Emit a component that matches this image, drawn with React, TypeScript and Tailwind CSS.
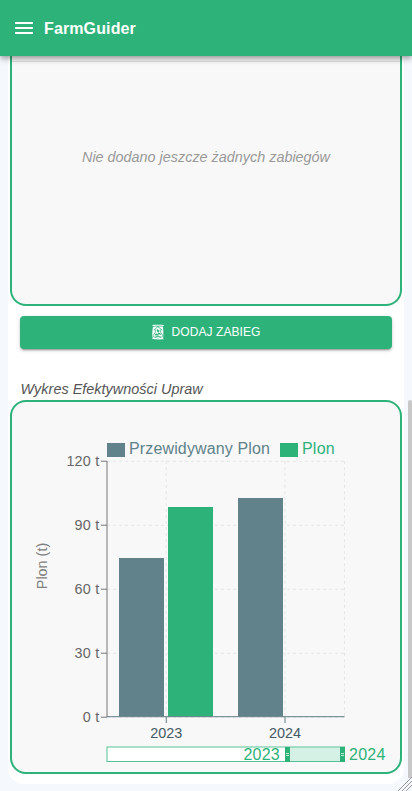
import { GiFertilizerBag } from "react-icons/gi";

const yTicks = [
  { label: "120 t", y: 461 },
  { label: "90 t", y: 525 },
  { label: "60 t", y: 589 },
  { label: "30 t", y: 653 },
  { label: "0 t", y: 717 },
];
const xTicks = [
  { label: "2023", x: 166.25 },
  { label: "2024", x: 285 },
];

function Header() {
  return (
    <header className="relative z-10 flex h-14 shrink-0 items-center bg-[#2db27a] pl-3 shadow-[0px_2px_4px_-1px_rgba(0,0,0,0.2),0px_4px_5px_0px_rgba(0,0,0,0.14),0px_1px_10px_0px_rgba(0,0,0,0.12)]">
      <svg className="size-6" viewBox="0 0 24 24" fill="white">
        <path d="M3 18h18v-2H3zm0-5h18v-2H3zm0-7v2h18V6z" />
      </svg>
      <h1 className="ml-2 pt-px text-base font-bold tracking-[0.12px] text-white">FarmGuider</h1>
    </header>
  );
}

function Traveller({ x }: { x: number }) {
  return (
    <g>
      <rect x={x} y={747} width={5} height={15} fill="#2db27a" />
      <path d={`M${x + 1} 753.5h3M${x + 1} 755.5h3`} stroke="#fff" strokeWidth={1} opacity={0.7} />
    </g>
  );
}

function Chart() {
  return (
    <svg className="block" width={388} height={370} viewBox="12 402 388 370">
      <g stroke="#e6e6e6" strokeDasharray="3 3">
        {yTicks.map((t) => (
          <line key={t.y} x1={107} x2={344.5} y1={t.y + 0.3} y2={t.y + 0.3} />
        ))}
        {[166.25, 285, 344.5].map((x) => (
          <line key={x} x1={x} x2={x} y1={461} y2={717} />
        ))}
      </g>
      <g stroke="#777">
        <line x1={107} x2={107} y1={461} y2={717} />
        {yTicks.map((t) => (
          <line key={t.y} x1={101} x2={107} y1={t.y + 0.2} y2={t.y + 0.2} />
        ))}
      </g>
      <g fill="#666" fontSize={14.4} textAnchor="end" letterSpacing={0.2}>
        {yTicks.map((t) => (
          <text key={t.y} x={99.4} y={t.y + 5}>{t.label}</text>
        ))}
      </g>
      <text transform="translate(47 566) rotate(-90)" textAnchor="middle" fontSize={14.4} fill="#808080">
        Plon (t)
      </text>
      <rect x={119} y={558} width={45} height={158.5} fill="#61828a" />
      <rect x={168} y={507} width={45} height={209.5} fill="#2db27a" />
      <rect x={238} y={498} width={45} height={218.5} fill="#61828a" />
      <g stroke="#607d86">
        <line x1={107} x2={344.5} y1={716.7} y2={716.7} />
        {xTicks.map((t) => (
          <line key={t.x} x1={t.x} x2={t.x} y1={717} y2={723} />
        ))}
      </g>
      <g fill="#455a64" fontSize={14.4} textAnchor="middle">
        {xTicks.map((t) => (
          <text key={t.x} x={t.x} y={738}>{t.label}</text>
        ))}
      </g>

      <rect x={107} y={443} width={18} height={14} fill="#61828a" />
      <text x={129} y={454} fontSize={16} letterSpacing={0.14} fill="#61828a">Przewidywany Plon</text>
      <rect x={280} y={443} width={18} height={14} fill="#2db27a" />
      <text x={302} y={454} fontSize={16} letterSpacing={0.2} fill="#2db27a">Plon</text>

      <rect x={107} y={747} width={237.5} height={14.5} fill="#fff" stroke="#2db27a" strokeOpacity={0.8} />
      <rect x={290} y={747.5} width={50} height={13.5} fill="#2db27a" fillOpacity={0.2} />
      <Traveller x={285} />
      <Traveller x={340} />
      <text x={280} y={760} fontSize={16} textAnchor="end" letterSpacing={0.25} fill="#2db27a">2023</text>
      <text x={349} y={760} fontSize={16} letterSpacing={0.25} fill="#2db27a">2024</text>
    </svg>
  );
}

export default function App() {
  return (
    <div className="relative flex h-[791px] w-full flex-col overflow-hidden bg-[#f5f9fe] font-['Liberation_Sans',Arial,sans-serif]">
      <Header />
      <main className="mx-2 flex h-[728px] w-[396px] flex-col rounded-b-[16px] bg-white">
        <section className="mx-0.5 h-[250px] shrink-0 rounded-b-[16px] border-x-2 border-b-2 border-[#2db27a] bg-[#f8f8f8]">
          <div className="h-1.5 border-b border-[#dedede] bg-[#f3f3f3]" />
          <p className="mt-[84px] text-center text-[14.4px] leading-[22px] text-[#999] italic">
            Nie dodano jeszcze żadnych zabiegów
          </p>
        </section>
        <button className="mx-3 mt-2.5 flex h-[33px] shrink-0 items-center justify-center gap-1.5 rounded-[4px] bg-[#2db27a] pr-0.5 pb-0.5 text-[12px] tracking-[0.08px] text-white shadow-[0px_3px_1px_-2px_rgba(0,0,0,0.2),0px_2px_2px_0px_rgba(0,0,0,0.14),0px_1px_5px_0px_rgba(0,0,0,0.12)]">
          <GiFertilizerBag className="size-4" />
          <span>DODAJ ZABIEG</span>
        </button>
        <h2 className="mt-[29px] ml-[12.5px] h-[22px] shrink-0 text-[14.4px] leading-[22px] tracking-[0.03px] text-[#555] italic">
          Wykres Efektywności Upraw
        </h2>
        <section className="mx-0.5 h-[374px] shrink-0 rounded-[16px] border-2 border-[#2db27a] bg-[#f8f8f8]">
          <Chart />
        </section>
      </main>
      <div className="absolute top-[400px] right-0 h-[378px] w-1 rounded-t-full bg-[#c8c8c8]" />
      <svg className="absolute right-0 bottom-0" width={14} height={14} viewBox="0 0 14 14" stroke="#999" strokeWidth={1}>
        <path d="M0 14L14 0M4 14L14 4M8 14L14 8" />
      </svg>
    </div>
  );
}
